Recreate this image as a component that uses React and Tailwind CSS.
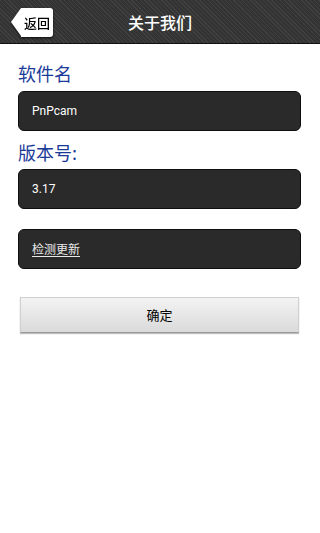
import React from "react";

export default function App() {
  const font = { fontFamily: '"Noto Sans CJK SC", "Noto Sans", sans-serif' };
  return (
    <div className="w-[320px] h-[533px] bg-white overflow-hidden" style={font}>
      <div className="relative h-[44px] border-b border-[#111] bg-[repeating-linear-gradient(45deg,#404040_0px,#404040_1px,#333333_1px,#333333_3px)] flex items-center justify-center">
        <div className="absolute left-[11px] top-[8px] flex items-stretch h-[29px] drop-shadow-[0_1px_1px_rgba(0,0,0,0.8)]">
          <div className="w-0 h-0 border-y-[14.5px] border-y-transparent border-r-[10px] border-r-white" />
          <div className="bg-white rounded-r-[3px] w-[32px] flex items-center justify-center text-[13px] text-black leading-none font-medium">
            返回
          </div>
        </div>
        <div className="text-white text-[16px] leading-none font-medium">关于我们</div>
      </div>

      <div className="pl-[18px] w-[301px]">
        <div className="mt-[18px] text-[18px] leading-[22px] text-[#1a3a98]">软件名</div>
        <div className="mt-[7px] h-[40px] rounded-[6px] bg-[#2a2a2a] border border-[#0e0e0e] flex items-center pl-[13px] text-white text-[12px]" style={{ fontFamily: 'Roboto, "Noto Sans", sans-serif' }}>
          PnPcam
        </div>
        <div className="mt-[10px] text-[18px] leading-[22px] text-[#1a3a98]">版本号:</div>
        <div className="mt-[6px] h-[40px] rounded-[6px] bg-[#2a2a2a] border border-[#0e0e0e] flex items-center pl-[13px] text-white text-[12px]" style={{ fontFamily: 'Roboto, "Noto Sans", sans-serif' }}>
          3.17
        </div>
        <div className="mt-[20px] h-[40px] rounded-[6px] bg-[#2a2a2a] border border-[#0e0e0e] flex items-center pl-[13px] text-[#e8e8e8] text-[12px] underline underline-offset-2">
          检测更新
        </div>
        <div className="mt-[28px] ml-[2px] w-[279px] h-[36px] bg-gradient-to-b from-[#f3f3f3] to-[#dadada] border border-[#d0d0d0] border-b-[#9a9a9a] shadow-[0_1px_1px_rgba(0,0,0,0.25)] flex items-center justify-center text-[13px] text-black">
          确定
        </div>
      </div>
    </div>
  );
}
